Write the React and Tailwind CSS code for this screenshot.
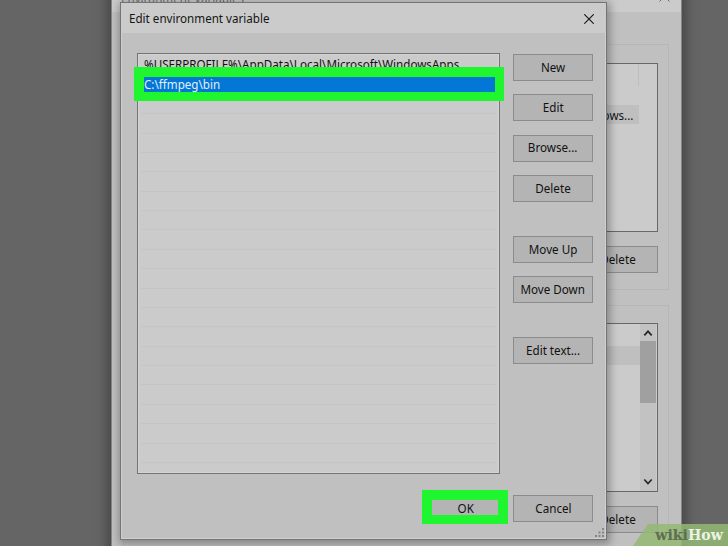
import React from "react";

const font = "font-['Noto_Sans','Open_Sans',sans-serif]";

function Label({ children, className = "origin-center" }) {
  return (
    <span className={`inline-block scale-x-[0.93] text-[12.5px] leading-[18px] whitespace-nowrap ${className}`}>
      {children}
    </span>
  );
}

function Button({ children, className = "w-20", labelClass = "origin-center" }) {
  return (
    <button
      className={`flex h-[27px] shrink-0 items-center justify-center border border-[#8b8b8b] bg-[#b4b4b4] text-[#111] ${className}`}
    >
      <Label className={labelClass}>{children}</Label>
    </button>
  );
}

function Chevron({ up }) {
  return (
    <svg className="h-[17px] w-4" viewBox="0 0 16 17" fill="none" stroke="#252525" strokeWidth="1.7">
      <path d={up ? "M4.3 11.3 8 7.3l3.7 4" : "M4.3 5.5 8 9.5l3.7-4"} />
    </svg>
  );
}

function ParentWindow() {
  return (
    <div className="absolute -top-[17px] left-[111px] flex h-[600px] w-[571px] flex-col border border-[#858585] bg-[#c0c0c0] shadow-[0_0_12px_3px_rgba(0,0,0,0.35)]">
      <div className="flex h-7 shrink-0 items-end justify-between bg-[#cbcbcb] pr-[11px] pb-1 pl-[9px] text-[#6f6f6f]">
        <Label className="origin-left">Environment Variables</Label>
        <svg className="mb-1.5 h-[11px] w-[11px]" viewBox="0 0 11 11" stroke="#6f6f6f" fill="none">
          <path d="M.5.5l10 10M10.5.5l-10 10" />
        </svg>
      </div>
      <div className="mt-8 mr-3 ml-[11px] h-[246px] shrink-0 border border-[#b6b6b6] pt-[18px] pr-[10px] pl-3">
        <div className="flex h-[169px] flex-col border border-[#686868] bg-[#cbcbcb] pr-[18px]">
          <div className="h-[22px] border-r border-[#bdbdbd]" />
          <div className="mt-[19px] flex h-[19px] items-center justify-end bg-[#bfbfbf] pt-[2px] pr-[6px] text-[#151515]">
            <Label className="origin-right">Windows...</Label>
          </div>
        </div>
        <div className="mt-[14px] flex justify-end">
          <Button className="w-20">Delete</Button>
        </div>
      </div>
      <div className="mt-[15px] mr-3 ml-[11px] h-[246px] shrink-0 border border-[#b6b6b6] pt-[17px] pr-[10px] pl-3">
        <div className="flex h-[169px] border border-[#686868] bg-[#cbcbcb] pr-px">
          <div className="flex-1 pt-[22px]">
            <div className="h-[19px] bg-[#bfbfbf]" />
          </div>
          <div className="flex w-4 flex-col justify-between bg-[#c2c2c2]">
            <div className="flex flex-col">
              <Chevron up />
              <div className="h-[62px] bg-[#a0a0a0]" />
            </div>
            <Chevron />
          </div>
        </div>
        <div className="mt-[14px] flex justify-end">
          <Button className="w-20">Delete</Button>
        </div>
      </div>
    </div>
  );
}

function EditDialog() {
  return (
    <div className="absolute top-[2px] left-[120px] flex h-[538px] w-[487px] flex-col border border-[#747474] bg-[#c0c0c0] shadow-[1px_2px_8px_2px_rgba(0,0,0,0.3),inset_0_0_0_1px_#d0d0d0]">
      <div className="flex h-[30px] shrink-0 items-center justify-between bg-[#cbcbcb] pt-px pr-3 pl-2">
        <Label className="origin-left text-[#151515]">Edit environment variable</Label>
        <svg className="h-[10px] w-[10px]" viewBox="0 0 10 10" stroke="#151515" strokeWidth="1.1" fill="none">
          <path d="M.3.3l9.4 9.4M9.7.3.3 9.7" />
        </svg>
      </div>
      <div className="flex pt-5 pl-4">
        <div className="h-[421px] w-[363px] shrink-0 border border-[#747474] bg-[#cbcbcb] px-[3px] pt-[2px] shadow-[inset_0_0_0_1px_#d4d4d4]">
          <div className="flex h-[19.4px] items-start pl-[3px] text-[#111]">
            <Label className="origin-left">%USERPROFILE%\AppData\Local\Microsoft\WindowsApps</Label>
          </div>
          <div className="h-[19.4px]" />
          {Array.from({ length: 19 }, (_, i) => (
            <div key={i} className="h-[19.38px] border-b border-[#c4c4c4]" />
          ))}
        </div>
        <div className="flex flex-col gap-[13.4px] pt-px pl-[13px]">
          <Button>New</Button>
          <Button>Edit</Button>
          <Button>Browse...</Button>
          <Button>Delete</Button>
          <Button className="mt-[20.5px] w-20">Move Up</Button>
          <Button>Move Down</Button>
          <Button className="mt-[20.5px] w-20">Edit text...</Button>
        </div>
      </div>
      <div className="mt-[21px] flex justify-end gap-[7px] pr-[13px]">
        <Button>OK</Button>
        <Button>Cancel</Button>
      </div>
      <svg className="absolute right-[2px] bottom-[2px] h-[9px] w-[9px]" viewBox="0 0 9 9" fill="#858585">
        <path d="M7 0h2v2H7zM3.5 3.5h2v2h-2zM7 3.5h2v2H7zM0 7h2v2H0zM3.5 7h2v2h-2zM7 7h2v2H7z" />
      </svg>
    </div>
  );
}

export default function App() {
  return (
    <div className={`relative h-[546px] w-[728px] overflow-hidden bg-[#656565] ${font}`}>
      <ParentWindow />
      <EditDialog />
      <div className="absolute top-[67px] left-[134px] flex h-[34px] w-[370px] items-center border-x-[10px] border-t-[10px] border-b-[9px] border-r-[9px] border-[#20f62f] bg-[#0277d5] text-[#e4eefa]">
        <Label className="origin-left">C:\ffmpeg\bin</Label>
      </div>
      <div className="absolute top-[490px] left-[422px] h-[34px] w-[86px] border-t-[10px] border-r-[10px] border-b-[9px] border-l-[10px] border-[#20f62f]" />
      <div className="absolute right-0 bottom-0 flex h-[22px] w-[95px] items-center justify-end bg-[#93b874]/85 pr-[5px] [clip-path:polygon(15px_0,100%_0,100%_100%,0_100%)]">
        <span className="origin-right scale-x-[0.94] font-['DejaVu_Serif',serif] text-[15px] leading-[22px] font-bold">
          <span className="text-[#5f6d50]">wiki</span>
          <span className="text-[#edf2e6]">How</span>
        </span>
      </div>
    </div>
  );
}
